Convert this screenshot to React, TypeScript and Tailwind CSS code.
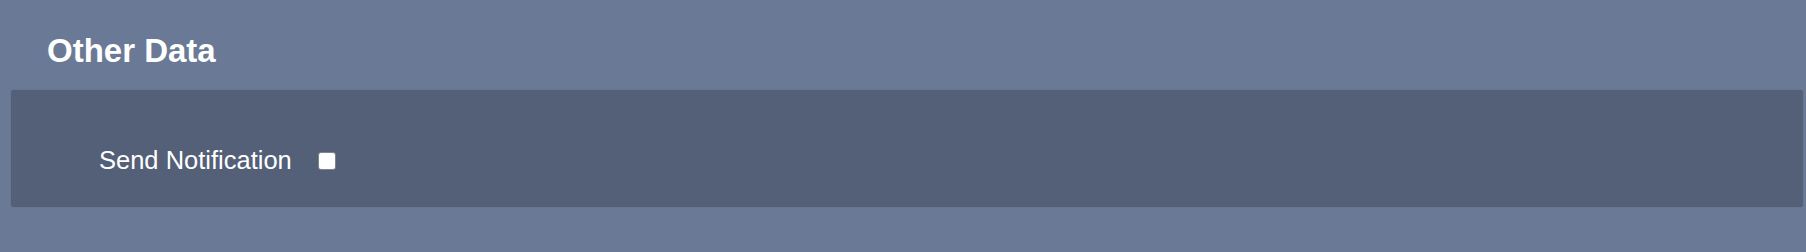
import React from "react";

export default function App() {
  return (
    <div
      className="w-full h-[252px] bg-[#6a7a96] overflow-hidden"
      style={{ fontFamily: '"Liberation Sans", Arial, Helvetica, sans-serif' }}
    >
      <div className="pt-[32px] pl-[47px]">
        <h2 className="text-[33px] leading-[37px] font-bold text-white">Other Data</h2>
      </div>
      <div className="mt-[21px] ml-[11px] mr-[3px] rounded-[3px] bg-[#546078] shadow-[0_0_1px_rgba(0,0,0,0.25)] pt-[56px] pb-[32px] pl-[88px]">
        <label className="flex items-center text-white text-[25.5px] leading-[29px]">
          <span>Send Notification</span>
          <input
            type="checkbox"
            className="ml-[26px] appearance-none w-[18px] h-[18px] bg-white border border-[#7d828c] rounded-[3px]"
          />
        </label>
      </div>
    </div>
  );
}
